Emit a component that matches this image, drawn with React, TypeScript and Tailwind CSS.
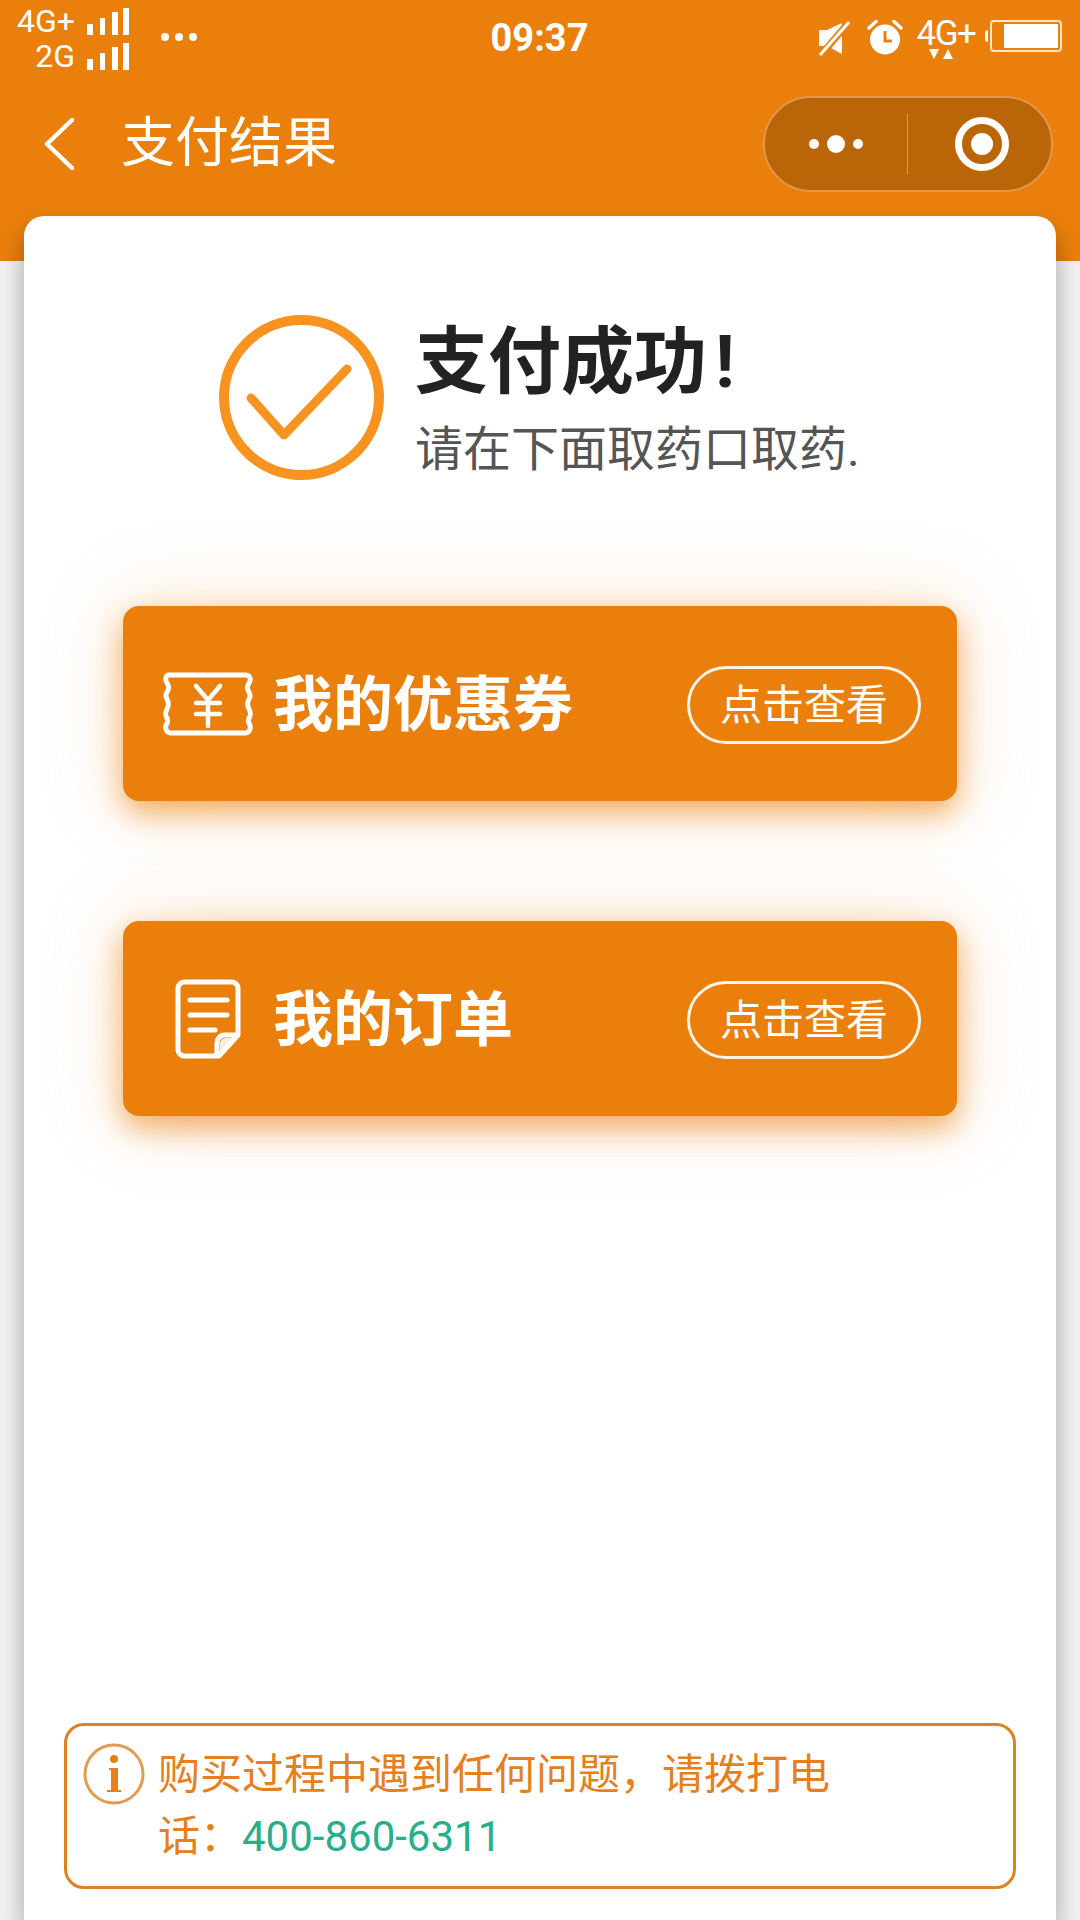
import React from 'react';

const fontStack = "font-['Roboto','Noto_Sans_CJK_SC',sans-serif]";

const SignalBars: React.FC = () => (
  <svg width="42" height="27" viewBox="0 0 42 27" fill="#fff" className="block">
    <rect x="0" y="16" width="6" height="11" />
    <rect x="13" y="10" width="5" height="17" />
    <rect x="25" y="4" width="6" height="23" />
    <rect x="36" y="0" width="6" height="27" />
  </svg>
);

const MuteIcon: React.FC = () => (
  <svg width="32" height="36" viewBox="0 0 32 36" className="block">
    <path d="M1 10h8L24 3v31L9 26H1z" fill="#fff" />
    <path d="M3 35L31 2" stroke="#eb7f0c" strokeWidth="7" />
    <path d="M2 35L31 2" stroke="#fff" strokeWidth="3" />
  </svg>
);

const AlarmIcon: React.FC = () => (
  <svg width="36" height="35" viewBox="0 0 36 35" className="block">
    <circle cx="18" cy="19.5" r="15" fill="#fff" />
    <path d="M2 8L9 1.5M34 8L27 1.5" stroke="#fff" strokeWidth="3.5" strokeLinecap="round" />
    <path d="M18 11v10h7" fill="none" stroke="#eb7f0c" strokeWidth="3" />
  </svg>
);

const TicketIcon: React.FC = () => (
  <svg width="90" height="64" viewBox="0 0 90 64" fill="none" stroke="#fff" strokeWidth="5" className="block">
    <path
      d="M8 3h74c4 0 6 3 5 6-2 4-4 6-2 9 2 4 3 6 1 9-2 4-2 6 0 10 2 4 2 6 0 9-1 3-1 5 1 7 1 4-1 8-5 8H8c-4 0-6-4-5-8 2-2 2-4 1-7-2-3-2-5 0-9 2-4 2-6 0-10-2-3-1-5 1-9 2-3 0-5-2-9-1-3 1-6 2-6z"
      strokeLinejoin="round"
    />
    <path
      d="M33 14l12 14 12-14M33 31h24M33 42h24M45 28v26"
      strokeWidth="4.5"
      strokeLinecap="round"
      strokeLinejoin="round"
    />
  </svg>
);

const OrderIcon: React.FC = () => (
  <svg width="66" height="80" viewBox="0 0 66 80" fill="none" stroke="#fff" strokeWidth="5" className="block">
    <path
      d="M9 3h48c3 0 6 3 6 6v47L44 77H9c-3 0-6-3-6-6V9c0-3 3-6 6-6z"
      strokeLinejoin="round"
    />
    <path d="M15 21h37M15 36h37M15 51h25" strokeLinecap="round" />
    <path d="M63 56H50c-5 0-8 4-8 8v13" strokeLinejoin="round" />
    <path d="M60 59H51c-3 0-6 2-6 6v8z" fill="#fff" stroke="none" opacity="0.85" />
  </svg>
);

const InfoIcon: React.FC = () => (
  <svg width="62" height="62" viewBox="0 0 62 62" className="block">
    <circle cx="31" cy="31" r="29" fill="none" stroke="#e59a4f" strokeWidth="3" />
    <circle cx="31" cy="16" r="4" fill="#e5801c" />
    <path d="M26 25h9v22h3v2H24v-2h4V27h-2z" fill="#e5801c" />
  </svg>
);

type ActionCardProps = {
  icon: React.ReactNode;
  label: string;
};

const ActionCard: React.FC<ActionCardProps> = ({ icon, label }) => (
  <div className="flex h-[195px] w-[834px] items-center rounded-[16px] bg-[#eb7f0c] pl-[40px] pr-[36px] shadow-[0_12px_30px_rgba(235,127,12,0.6),0_0_80px_rgba(240,170,90,0.3)]">
    <span className="flex w-[90px] justify-center">{icon}</span>
    <span className="ml-[20px] pt-[4px] text-[60px] font-bold leading-none text-white">{label}</span>
    <span className="ml-auto mt-[2px] flex h-[78px] w-[234px] items-center justify-center rounded-full border-[3px] border-[#fdf3e6] pt-[2px] text-[42px] leading-none text-white">
      点击查看
    </span>
  </div>
);

export default function App() {
  return (
    <div className={`flex h-[1920px] w-[1080px] flex-col overflow-hidden bg-[#f2f2f2] ${fontStack}`}>
      <header className="h-[261px] shrink-0 bg-[#eb7f0c] text-white">
        {/* status bar */}
        <div className="grid h-[96px] grid-cols-[1fr_auto_1fr] items-start pl-[17px] pr-[18px] pt-[8px]">
          <div className="flex items-center gap-[32px]">
            <div className="flex flex-col items-end gap-[8px]">
              <div className="flex items-end gap-[12px]">
                <span className="text-[32px] leading-[27px]">4G+</span>
                <SignalBars />
              </div>
              <div className="flex items-end gap-[12px]">
                <span className="text-[32px] leading-[27px]">2G</span>
                <SignalBars />
              </div>
            </div>
            <div className="mt-[-4px] flex gap-[6px]">
              <span className="size-[8px] rounded-full bg-white" />
              <span className="size-[8px] rounded-full bg-white" />
              <span className="size-[8px] rounded-full bg-white" />
            </div>
          </div>
          <span className="mt-[7px] text-center text-[38px] font-bold leading-[46px]">09:37</span>
          <div className="flex items-start justify-end pt-[12px]">
            <MuteIcon />
            <span className="ml-[17px]">
              <AlarmIcon />
            </span>
            <div className="ml-[12px] flex w-[62px] flex-col items-center">
              <span className="text-[35px] leading-[27px] tracking-[-1.5px]">4G+</span>
              <svg width="24" height="10" viewBox="0 0 24 10" fill="#fff" className="mr-[10px] mt-[2px] block">
                <path d="M0 0h10L5 10zM14 10h10L19 0z" />
              </svg>
            </div>
            <div className="ml-[8px] flex items-center">
              <span className="h-[12px] w-[3px] rounded-l-full bg-white" />
              <div className="ml-[2px] flex h-[32px] w-[72px] justify-end rounded-[4px] border-[2px] border-[#fbe3c4] p-[2px]">
                <span className="h-full w-[54px] bg-white" />
              </div>
            </div>
          </div>
        </div>

        {/* title row and capsule */}
        <div className="flex h-[96px] items-center pl-[44px] pr-[27px]">
          <svg width="30" height="52" viewBox="0 0 30 52" fill="none" stroke="#fff" strokeWidth="4.5" className="shrink-0">
            <path d="M28 2L3 26L28 50" strokeLinecap="round" strokeLinejoin="round" />
          </svg>
          <h1 className="ml-[47px] text-[54px] font-normal leading-none">支付结果</h1>
          <div className="ml-auto flex h-[96px] w-[290px] items-center rounded-full border-[2px] border-[#e0974a] bg-[#b96508]">
            <div className="flex w-[142px] items-center justify-center gap-[8px]">
              <span className="size-[10px] rounded-full bg-white" />
              <span className="size-[18px] rounded-full bg-white" />
              <span className="size-[10px] rounded-full bg-white" />
            </div>
            <span className="h-[60px] w-[1px] bg-[#dc9a52]" />
            <div className="flex flex-1 items-center justify-center pl-[5px]">
              <span className="flex size-[54px] items-center justify-center rounded-full border-[7px] border-white">
                <span className="size-[22px] rounded-full bg-white" />
              </span>
            </div>
          </div>
        </div>
      </header>

      <main className="mx-[24px] -mt-[45px] flex h-[1704px] shrink-0 flex-col rounded-t-[20px] bg-white pb-[31px] pt-[99px] shadow-[0_14px_26px_rgba(0,0,0,0.32)]">
        <section className="flex items-center pl-[195px]">
          <svg width="165" height="165" viewBox="0 0 165 165" fill="none" stroke="#f7931e" className="shrink-0">
            <circle cx="82.5" cy="82.5" r="77.5" strokeWidth="10" />
            <path d="M32 83L65 120L128 54" strokeWidth="9" strokeLinecap="round" strokeLinejoin="round" />
          </svg>
          <div className="ml-[31px] pt-[5px]">
            <h2 className="flex text-[73px] font-bold leading-[84px] text-[#222222]">
              支付成功<span className="ml-[8px]">!</span>
            </h2>
            <p className="mt-[16px] text-[48px] leading-[60px] text-[#555555]">请在下面取药口取药.</p>
          </div>
        </section>

        <div className="ml-[99px] mt-[126px] flex flex-col gap-[120px]">
          <ActionCard icon={<TicketIcon />} label="我的优惠券" />
          <ActionCard icon={<OrderIcon />} label="我的订单" />
        </div>

        <footer className="mx-[40px] mt-auto flex h-[166px] rounded-[20px] border-[3px] border-[#e0811f] pl-[16px] pt-[17px]">
          <span className="shrink-0">
            <InfoIcon />
          </span>
          <p className="ml-[13px] mt-[1px] text-[42px] leading-[62px] text-[#e5801c]">
            <span className="block">购买过程中遇到任何问题，请拨打电</span>
            <span className="block">
              话：<span className="text-[#27ae8c]">400-860-6311</span>
            </span>
          </p>
        </footer>
      </main>
    </div>
  );
}
